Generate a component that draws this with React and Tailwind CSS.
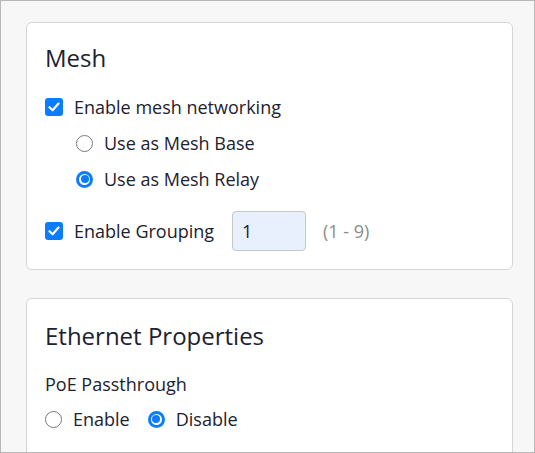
import React from "react";

const font = { fontFamily: '"Open Sans", "Noto Sans", sans-serif' };

const Checkbox = () => (
  <span className="flex h-[18px] w-[18px] shrink-0 items-center justify-center rounded-[3px] bg-[#0b7cff]">
    <svg width="12" height="10" viewBox="0 0 12 10" fill="none">
      <path d="M1.5 5.2 L4.6 8.2 L10.5 1.6" stroke="white" strokeWidth="2.2" strokeLinecap="round" strokeLinejoin="round" />
    </svg>
  </span>
);

const Radio = ({ checked }) =>
  checked ? (
    <span className="flex h-[17px] w-[17px] shrink-0 items-center justify-center rounded-full bg-[#0b7cff]">
      <span className="flex h-[11px] w-[11px] items-center justify-center rounded-full bg-white">
        <span className="h-[8px] w-[8px] rounded-full bg-[#0b7cff]" />
      </span>
    </span>
  ) : (
    <span className="h-[17px] w-[17px] shrink-0 rounded-full border border-[#7a7a7a] bg-white" />
  );

const Row = ({ control, label, className = "" }) => (
  <label className={`flex items-center gap-[11px] ${className}`}>
    {control}
    <span className="text-[18px] leading-6">{label}</span>
  </label>
);

export default function App() {
  return (
    <div
      style={font}
      className="h-[453px] w-[535px] overflow-hidden border border-[#b8b8b8] bg-[#f7f7f7] pl-[25px] pt-[21px] text-[#1c2230]"
    >
      <div className="w-[487px] rounded-md border border-[#d6d6d6] bg-white px-[18px] pb-[18px] pt-[19px]">
        <h2 className="text-[24px] leading-8">Mesh</h2>
        <Row className="mt-[15px] h-9" control={<Checkbox />} label="Enable mesh networking" />
        <div className="pl-[31px]">
          <Row className="h-9" control={<Radio />} label="Use as Mesh Base" />
          <Row className="h-9" control={<Radio checked />} label="Use as Mesh Relay" />
        </div>
        <div className="mt-[14px] flex h-10 items-center">
          <Row control={<Checkbox />} label="Enable Grouping" />
          <input
            readOnly
            value="1"
            className="ml-[18px] h-10 w-[74px] rounded-[4px] border border-[#c4c7cc] bg-[#e8f0fe] pl-[9px] text-[18px] text-[#1c2230] outline-none"
            style={font}
          />
          <span className="ml-[17px] text-[18px] text-[#8c8c8c]">(1 - 9)</span>
        </div>
      </div>

      <div className="mt-[28px] h-[200px] w-[487px] rounded-md border border-[#d6d6d6] bg-white px-[18px] pt-[21px]">
        <h2 className="text-[24px] leading-8">Ethernet Properties</h2>
        <div className="mt-5 text-[18px] leading-6">PoE Passthrough</div>
        <div className="mt-[9px] flex h-7 items-center gap-[18px]">
          <Row control={<Radio />} label="Enable" />
          <Row control={<Radio checked />} label="Disable" />
        </div>
      </div>
    </div>
  );
}
